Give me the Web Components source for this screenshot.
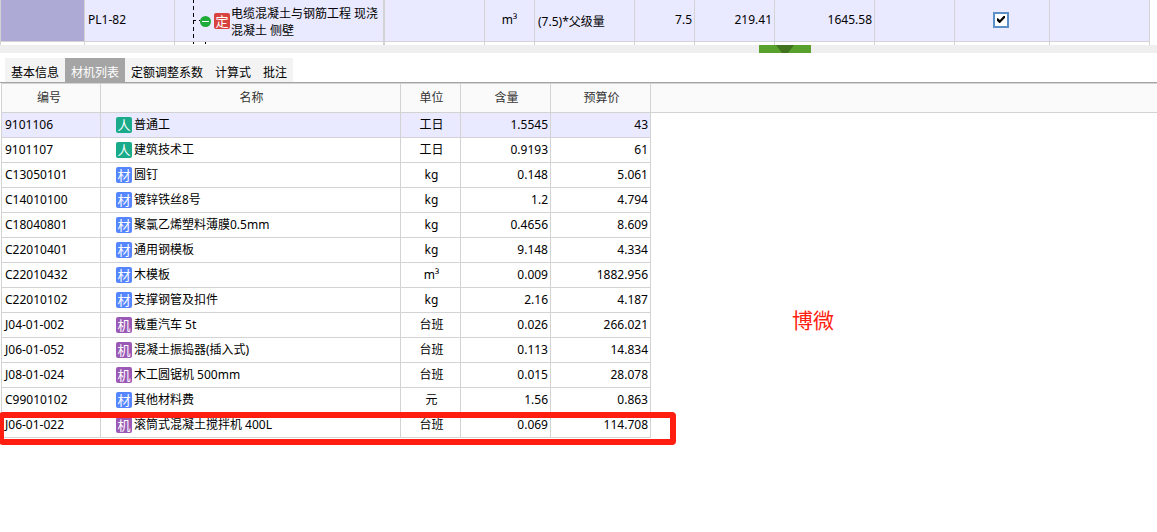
<!DOCTYPE html>
<html lang="zh-CN">
<head>
<meta charset="utf-8">
<title>材机列表</title>
<style>
  body {
    margin: 0;
    background: #fff;
    color: #000;
    font: 12px/16px "Noto Sans", "Noto Sans CJK SC", sans-serif;
  }
</style>
</head>
<body>
<cost-app></cost-app>

<script>
  const define = (name, html, setup) => {
    const template = document.createElement('template');
    template.innerHTML = html;
    customElements.define(name, class extends HTMLElement {
      connectedCallback() {
        if (this.shadowRoot) return;
        const root = this.attachShadow({ mode: 'open' });
        root.append(template.content.cloneNode(true));
        if (setup) setup(root, this);
      }
    });
  };

  /* Small coloured square that names the kind of an item */
  define('kind-badge', `
    <style>
      :host {
        display: inline-flex; flex: none; align-items: center; justify-content: center;
        width: 16px; height: 16px; border-radius: 2px;
        color: #fff; font-size: 13px; line-height: 16px;
      }
      :host([kind="labor"]) { background: #1aab8b; }
      :host([kind="material"]) { background: #5585ff; }
      :host([kind="machine"]) { background: #9b59b6; }
      :host([kind="quota"]) { background: #d9433f; }
    </style>
    <slot></slot>`);

  /* Selected quota row of the project grid */
  define('quota-grid', `
    <style>
      :host { display: block; overflow: hidden; }
      table { table-layout: fixed; width: 1150px; border-spacing: 0; }
      td {
        box-sizing: border-box; height: 42px; padding: 0 2px 2px 3px; background: #e9e9ff;
        border-right: 1px solid #d3d3d3; border-bottom: 1px solid #d3d3d3;
      }
      td:first-child { border-left: 1px solid #d3d3d3; background: #aeaad6; }
      td.name { border-right-width: 2px; padding: 0; }
      .next td { height: 3px; padding: 0; border-bottom: 0; background: #fff; line-height: 0; }
      .center { text-align: center; padding-left: 2px; }
      .check { padding-left: 0; }
      .num { text-align: right; }
      .low { padding: 2px 0 0 3px; }
      .tree { display: flex; align-items: center; height: 41px; line-height: 17px; }
      .tree span { padding: 3px 0 0 1px; }
      svg { display: block; flex: none; }
      input {
        appearance: none; box-sizing: border-box; display: block;
        width: 16px; height: 16px; margin: 0 auto;
        border: 2px solid #5b8fc8; background: #fff;
      }
      input:checked::before {
        content: ""; display: block; width: 8px; height: 8px; margin: 2px; background: #000;
        clip-path: polygon(0 34%, 12% 34%, 36% 56%, 88% 0, 100% 0, 100% 28%, 38% 94%, 28% 94%, 0 66%);
      }
    </style>
    <table aria-label="工程量清单">
      <colgroup>
        <col style="width:85px"><col style="width:90px"><col style="width:210px"><col style="width:100px">
        <col style="width:50px"><col style="width:100px"><col style="width:60px"><col style="width:80px">
        <col style="width:100px"><col style="width:80px"><col style="width:95px"><col style="width:100px">
      </colgroup>
      <tbody>
        <tr>
          <td></td>
          <td>PL1-82</td>
          <td class="name">
            <div class="tree">
              <svg width="39" height="41" viewBox="0 0 39 41" aria-hidden="true">
                <path d="M18.5 0V41" stroke="#000" stroke-dasharray="4 3" stroke-dashoffset="1"/>
                <path d="M19 20.5H25" stroke="#000" stroke-dasharray="2 3"/>
                <circle cx="30.5" cy="21.5" r="5.5" fill="#1fab38"/>
                <path d="M27 21.5H34" stroke="#fff"/>
              </svg>
              <kind-badge kind="quota">定</kind-badge>
              <span>电缆混凝土与钢筋工程 现浇混凝土 侧壁</span>
            </div>
          </td>
          <td></td>
          <td class="center">m³</td>
          <td class="low">(7.5)*父级量</td>
          <td class="num">7.5</td>
          <td class="num">219.41</td>
          <td class="num">1645.58</td>
          <td></td>
          <td class="check"><input type="checkbox" checked aria-label="计入"></td>
          <td></td>
        </tr>
        <tr class="next">
          <td style="background:#fff"></td><td></td>
          <td class="name">
            <svg width="39" height="3" viewBox="0 0 39 3" aria-hidden="true">
              <path d="M18.5 0V2M30.5 0V2" stroke="#000"/>
            </svg>
          </td>
          <td></td><td></td><td></td><td></td><td></td><td></td><td></td><td></td><td></td>
        </tr>
      </tbody>
    </table>`);

  /* Bar between the two panes, with its collapse handle */
  define('split-bar', `
    <style>
      :host { display: flex; height: 8px; padding-left: 759px; background: #efefef; }
      button { display: block; width: 52px; height: 8px; padding: 0; border: 0; background: #5aa02c; }
      svg { display: block; margin: 0 auto; }
    </style>
    <button aria-label="收起">
      <svg width="18" height="8" viewBox="0 0 18 8"><path d="M0 0H18L12 8H6Z" fill="#42731f"/></svg>
    </button>`);

  define('detail-tabs', `
    <style>
      :host { display: flex; padding: 5px 5px 0; border-bottom: 1px solid #a5a5a5; }
      button {
        height: 24px; padding: 6px 6px 0; border: 0; background: #f3f3f3;
        font: inherit; color: #000; white-space: nowrap;
      }
      button[aria-selected="true"] { background: #a5a5a5; color: #fff; }
    </style>
    <button role="tab">基本信息</button><button role="tab" aria-selected="true">材机列表</button><button role="tab">定额调整系数</button><button role="tab">计算式</button><button role="tab">批注</button>`,
    (root, host) => host.setAttribute('role', 'tablist'));

  const kinds = { 人: 'labor', 材: 'material', 机: 'machine' };
  const rows = [
    ['9101106', '人', '普通工', '工日', '1.5545', '43'],
    ['9101107', '人', '建筑技术工', '工日', '0.9193', '61'],
    ['C13050101', '材', '圆钉', 'kg', '0.148', '5.061'],
    ['C14010100', '材', '镀锌铁丝8号', 'kg', '1.2', '4.794'],
    ['C18040801', '材', '聚氯乙烯塑料薄膜0.5mm', 'kg', '0.4656', '8.609'],
    ['C22010401', '材', '通用钢模板', 'kg', '9.148', '4.334'],
    ['C22010432', '材', '木模板', 'm³', '0.009', '1882.956'],
    ['C22010102', '材', '支撑钢管及扣件', 'kg', '2.16', '4.187'],
    ['J04-01-002', '机', '载重汽车 5t', '台班', '0.026', '266.021'],
    ['J06-01-052', '机', '混凝土振捣器(插入式)', '台班', '0.113', '14.834'],
    ['J08-01-024', '机', '木工圆锯机 500mm', '台班', '0.015', '28.078'],
    ['C99010102', '材', '其他材料费', '元', '1.56', '0.863'],
    ['J06-01-022', '机', '滚筒式混凝土搅拌机 400L', '台班', '0.069', '114.708']
  ];

  define('resource-table', `
    <style>
      :host { display: block; }
      table { table-layout: fixed; width: 100%; border-spacing: 0; border-top: 1px solid #d3d3d3; }
      th, td {
        box-sizing: border-box; white-space: nowrap;
        border-right: 1px solid #d3d3d3; border-bottom: 1px solid #d3d3d3;
      }
      th { height: 29px; padding: 0 0 0 2px; background: #fafafa; color: #333; font-weight: normal; }
      th:last-child { border-right: 0; }
      td { height: 25px; padding: 0 2px 0 4px; text-align: right; }
      th:first-child, td:first-child { border-left: 1px solid #d3d3d3; }
      th:first-child { padding: 0 4px 0 0; }
      td:first-child { padding-left: 3px; }
      td:first-child, td:nth-child(2) { text-align: left; }
      td:nth-child(2) { padding-left: 15px; }
      td:nth-child(3) { text-align: center; }
      td:last-child { border: 0; }
      tbody tr:first-child td:not(:last-child) { background: #e9e9ff; }
      .item { display: flex; align-items: center; gap: 2px; }
    </style>
    <table>
      <colgroup>
        <col style="width:100px"><col style="width:300px"><col style="width:60px">
        <col style="width:90px"><col style="width:100px"><col>
      </colgroup>
      <thead><tr><th>编号</th><th>名称</th><th>单位</th><th>含量</th><th>预算价</th><th></th></tr></thead>
      <tbody></tbody>
    </table>`,
    root => {
      root.querySelector('tbody').innerHTML = rows.map(([code, kind, name, unit, qty, price]) => `
        <tr><td>${code}</td>
        <td><div class="item"><kind-badge kind="${kinds[kind]}">${kind}</kind-badge><span>${name}</span></div></td>
        <td>${unit}</td><td>${qty}</td><td>${price}</td><td></td></tr>`).join('');
    });

  /* Red marks laid over the table: a frame round the last row and a note */
  define('mark-frame', `
    <style>
      :host {
        position: absolute; left: -1px; bottom: -7px; width: 677px; height: 33px;
        box-sizing: border-box; border: 6px solid #ff1e10; border-left-width: 5px; border-radius: 4px;
      }
    </style>`);
  define('mark-note', `
    <style>
      :host {
        position: absolute; left: 792px; top: 222px;
        color: #ff1e10; font-size: 21px; line-height: 30px;
      }
    </style>
    <slot></slot>`);

  define('cost-app', `
    <style>
      :host { display: block; overflow: hidden; min-height: 100vh; }
      main { margin-left: 1px; }
      .pane { position: relative; }
    </style>
    <quota-grid></quota-grid>
    <split-bar></split-bar>
    <detail-tabs></detail-tabs>
    <div class="pane">
      <main><resource-table></resource-table></main>
      <mark-frame></mark-frame>
      <mark-note>博微</mark-note>
    </div>`);
</script>
</body>
</html>
